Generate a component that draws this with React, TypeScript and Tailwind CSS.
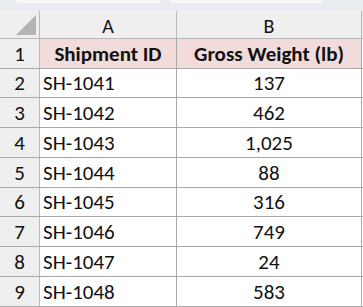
const rows = [
  { id: 'SH-1041', w: '137', h: 'h-[29px]' },
  { id: 'SH-1042', w: '462', h: 'h-[30px]' },
  { id: 'SH-1043', w: '1,025', h: 'h-[30px]' },
  { id: 'SH-1044', w: '88', h: 'h-[30px]' },
  { id: 'SH-1045', w: '316', h: 'h-[29px]' },
  { id: 'SH-1046', w: '749', h: 'h-[30px]' },
  { id: 'SH-1047', w: '24', h: 'h-[30px]' },
  { id: 'SH-1048', w: '583', h: 'h-[30px]' },
];

const font = { fontFamily: 'Carlito, Calibri, "Open Sans", sans-serif' };

export default function App() {
  return (
    <div className="w-[363px] h-[307px] overflow-hidden bg-white text-[#111]" style={font}>
      {/* formula bar edge */}
      <div className="h-[11px] bg-[#e9edf1] flex">
        <div className="ml-[17px] w-[143px] h-[3px] bg-[#f7f8fa]" />
        <div className="ml-[10px] w-[152px] h-[3px] bg-[#f7f8fa]" />
      </div>

      {/* column headers */}
      <div className="flex h-[28px] bg-[#efefef] border-b border-[#b8b8b8]">
        <div className="w-[40px] border-r border-[#b8b8b8] relative">
          <div
            className="absolute right-[3px] bottom-[3px] w-[20px] h-[20px] bg-[#b4b4b4]"
            style={{ clipPath: 'polygon(100% 0, 100% 100%, 0 100%)' }}
          />
        </div>
        <div className="w-[137px] border-r border-[#b8b8b8] flex items-center justify-center text-[20px] pt-[2px]">
          A
        </div>
        <div className="w-[185px] border-r border-[#b8b8b8] flex items-center justify-center text-[20px] pt-[2px]">
          B
        </div>
      </div>

      {/* header row */}
      <div className="flex h-[30px] border-b border-[#a9a9a9]">
        <div className="w-[40px] bg-[#efefef] border-r border-[#b8b8b8] flex items-center justify-center text-[21px] pt-[2px]">
          1
        </div>
        <div className="w-[137px] bg-[#f2dcdb] border-r border-[#a9a9a9] flex items-center justify-center text-[21px] font-bold pt-[2px]">
          Shipment ID
        </div>
        <div className="w-[185px] bg-[#f2dcdb] border-r border-[#a9a9a9] flex items-center justify-center text-[21px] font-bold pt-[2px]">
          Gross Weight (lb)
        </div>
      </div>

      {rows.map((r, i) => (
        <div key={r.id} className={`flex border-b border-[#a9a9a9] ${r.h}`}>
          <div className="w-[40px] bg-[#efefef] border-r border-[#b8b8b8] flex items-center justify-center text-[21px] pt-[2px]">
            {i + 2}
          </div>
          <div className="w-[137px] border-r border-[#a9a9a9] flex items-center pl-[3px] text-[21px] pt-[2px]">
            {r.id}
          </div>
          <div className="w-[185px] border-r border-[#a9a9a9] flex items-center justify-center text-[21px] pt-[2px]">
            {r.w}
          </div>
        </div>
      ))}
    </div>
  );
}
